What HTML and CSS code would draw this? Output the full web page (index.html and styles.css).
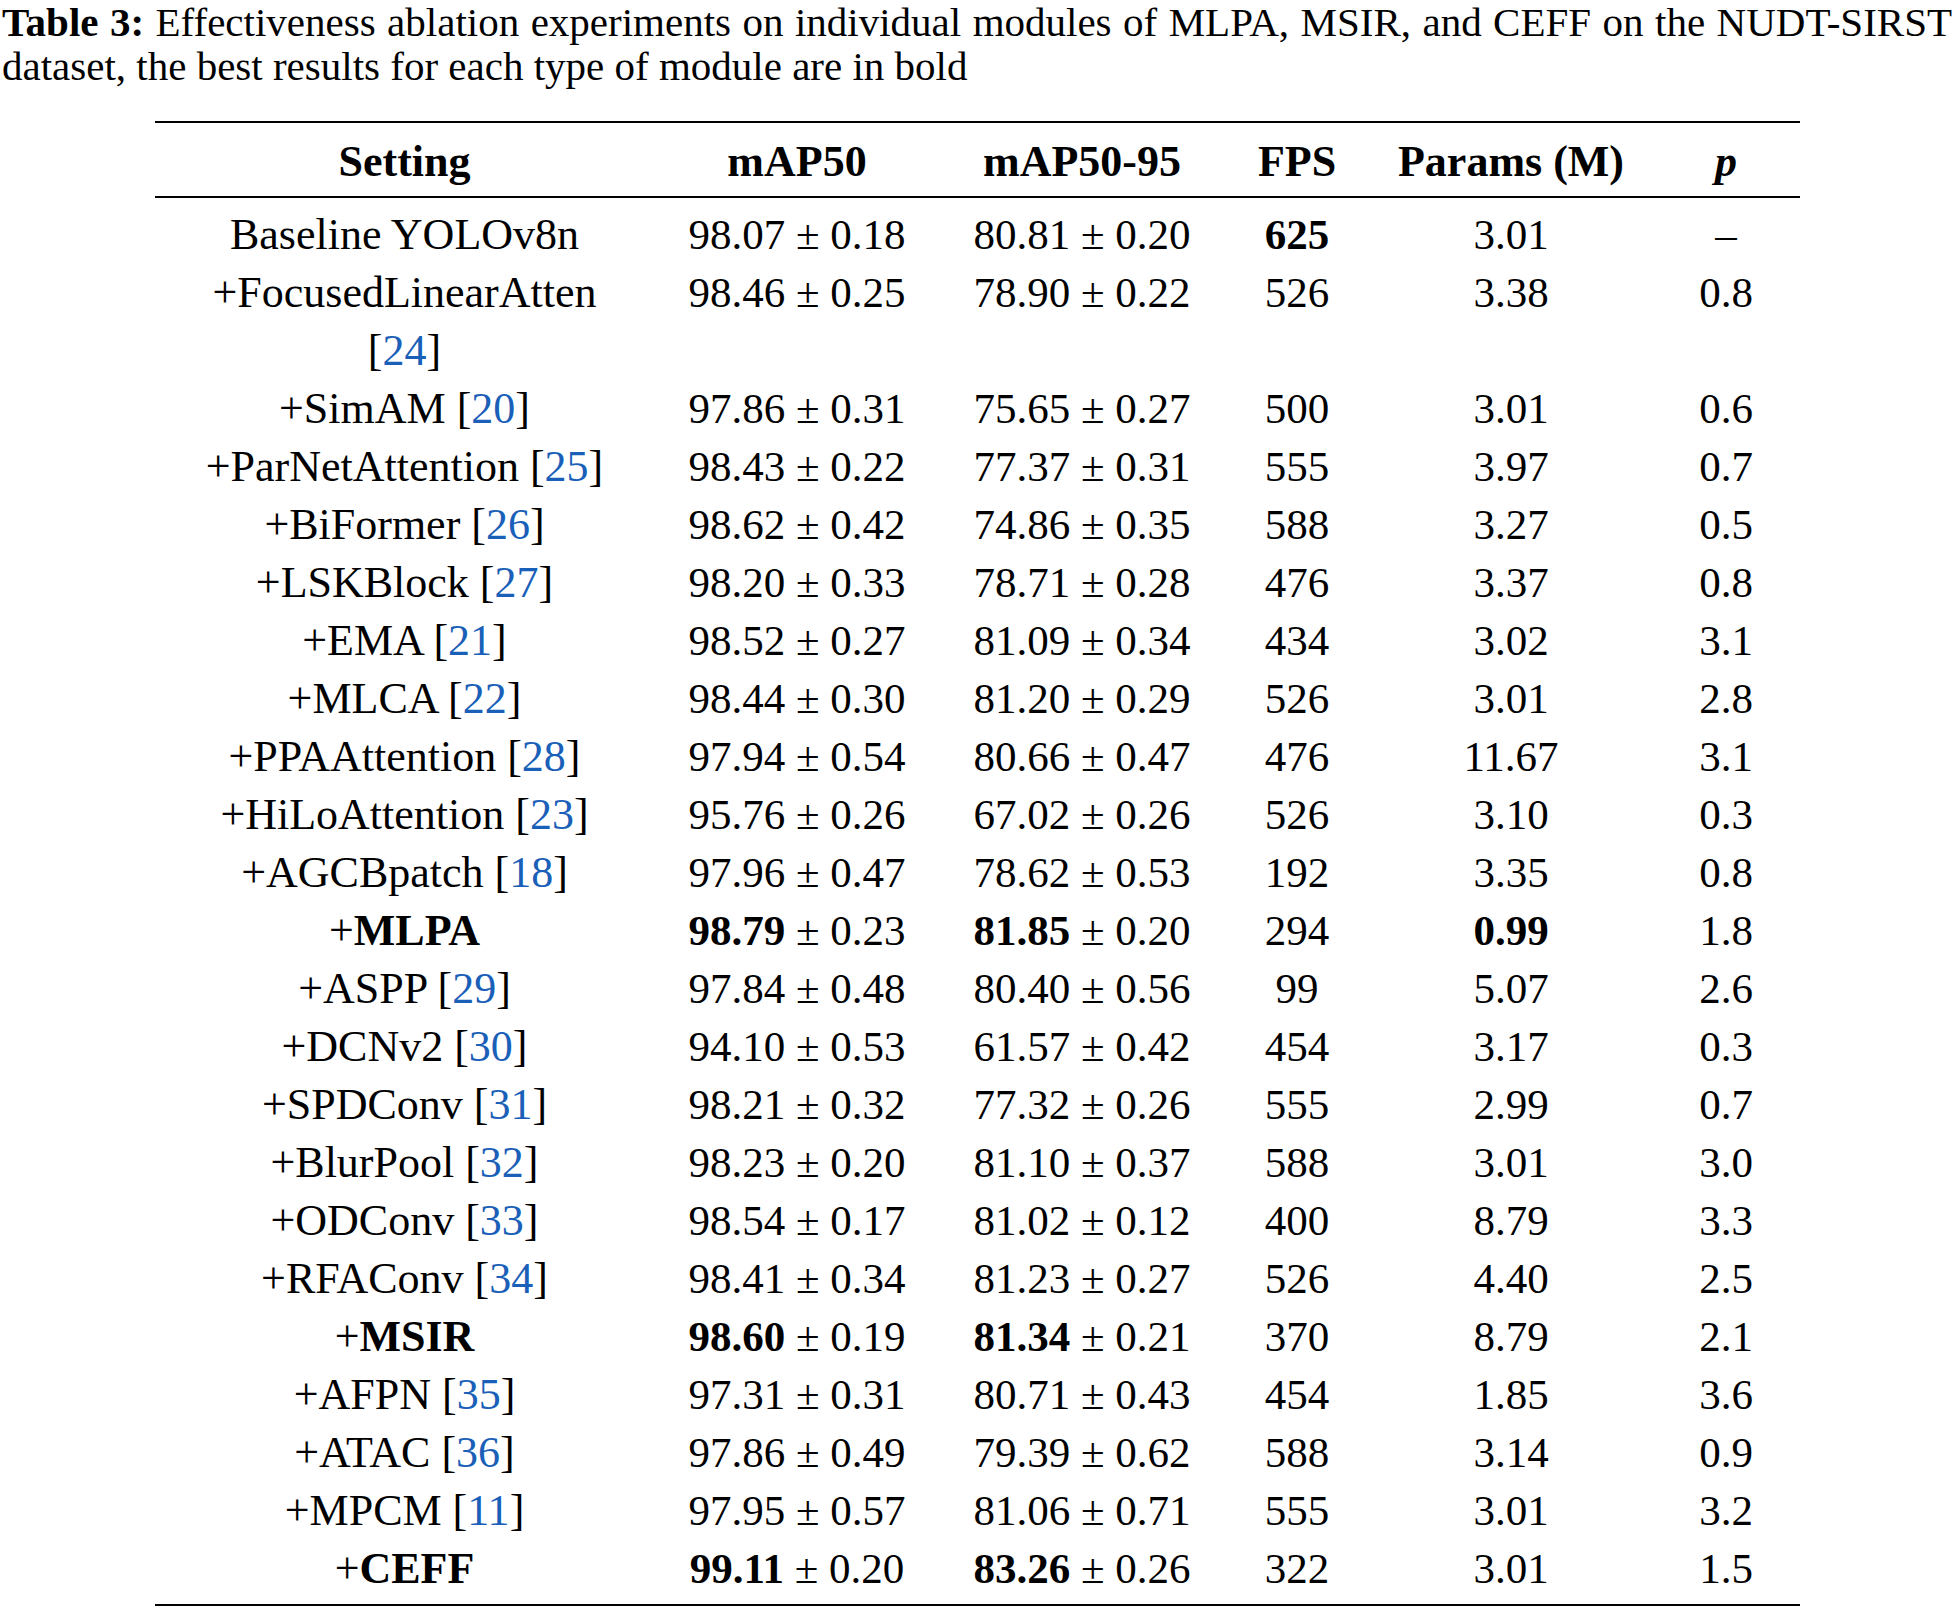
FILE: index.html
```html
<!DOCTYPE html>
<html lang="en">
<head>
<meta charset="utf-8">
<title>Table 3</title>
<link rel="stylesheet" href="styles.css">
</head>
<body>
<div class="caption">
  <span class="cap-line cap-first"><b>Table 3:</b> Effectiveness ablation experiments on individual modules of MLPA, MSIR, and CEFF on the NUDT-SIRST</span>
  <span class="cap-line">dataset, the best results for each type of module are in bold</span>
</div>
<table class="results">
  <colgroup>
    <col class="c-set"><col class="c-map"><col class="c-map95"><col class="c-fps"><col class="c-par"><col class="c-p">
  </colgroup>
  <thead>
    <tr><th>Setting</th><th>mAP50</th><th>mAP50-95</th><th>FPS</th><th>Params (M)</th><th><i>p</i></th></tr>
  </thead>
  <tbody>
    <tr><td class="set">Baseline YOLOv8n</td><td>98.07 ± 0.18</td><td>80.81 ± 0.20</td><td><b>625</b></td><td>3.01</td><td>–</td></tr>
    <tr><td class="set">+FocusedLinearAtten<br>[<span class="ref">24</span>]</td><td>98.46 ± 0.25</td><td>78.90 ± 0.22</td><td>526</td><td>3.38</td><td>0.8</td></tr>
    <tr><td class="set">+SimAM [<span class="ref">20</span>]</td><td>97.86 ± 0.31</td><td>75.65 ± 0.27</td><td>500</td><td>3.01</td><td>0.6</td></tr>
    <tr><td class="set">+ParNetAttention [<span class="ref">25</span>]</td><td>98.43 ± 0.22</td><td>77.37 ± 0.31</td><td>555</td><td>3.97</td><td>0.7</td></tr>
    <tr><td class="set">+BiFormer [<span class="ref">26</span>]</td><td>98.62 ± 0.42</td><td>74.86 ± 0.35</td><td>588</td><td>3.27</td><td>0.5</td></tr>
    <tr><td class="set">+LSKBlock [<span class="ref">27</span>]</td><td>98.20 ± 0.33</td><td>78.71 ± 0.28</td><td>476</td><td>3.37</td><td>0.8</td></tr>
    <tr><td class="set">+EMA [<span class="ref">21</span>]</td><td>98.52 ± 0.27</td><td>81.09 ± 0.34</td><td>434</td><td>3.02</td><td>3.1</td></tr>
    <tr><td class="set">+MLCA [<span class="ref">22</span>]</td><td>98.44 ± 0.30</td><td>81.20 ± 0.29</td><td>526</td><td>3.01</td><td>2.8</td></tr>
    <tr><td class="set">+PPAAttention [<span class="ref">28</span>]</td><td>97.94 ± 0.54</td><td>80.66 ± 0.47</td><td>476</td><td>11.67</td><td>3.1</td></tr>
    <tr><td class="set">+HiLoAttention [<span class="ref">23</span>]</td><td>95.76 ± 0.26</td><td>67.02 ± 0.26</td><td>526</td><td>3.10</td><td>0.3</td></tr>
    <tr><td class="set">+AGCBpatch [<span class="ref">18</span>]</td><td>97.96 ± 0.47</td><td>78.62 ± 0.53</td><td>192</td><td>3.35</td><td>0.8</td></tr>
    <tr><td class="set">+<b>MLPA</b></td><td><b>98.79</b> ± 0.23</td><td><b>81.85</b> ± 0.20</td><td>294</td><td><b>0.99</b></td><td>1.8</td></tr>
    <tr><td class="set">+ASPP [<span class="ref">29</span>]</td><td>97.84 ± 0.48</td><td>80.40 ± 0.56</td><td>99</td><td>5.07</td><td>2.6</td></tr>
    <tr><td class="set">+DCNv2 [<span class="ref">30</span>]</td><td>94.10 ± 0.53</td><td>61.57 ± 0.42</td><td>454</td><td>3.17</td><td>0.3</td></tr>
    <tr><td class="set">+SPDConv [<span class="ref">31</span>]</td><td>98.21 ± 0.32</td><td>77.32 ± 0.26</td><td>555</td><td>2.99</td><td>0.7</td></tr>
    <tr><td class="set">+BlurPool [<span class="ref">32</span>]</td><td>98.23 ± 0.20</td><td>81.10 ± 0.37</td><td>588</td><td>3.01</td><td>3.0</td></tr>
    <tr><td class="set">+ODConv [<span class="ref">33</span>]</td><td>98.54 ± 0.17</td><td>81.02 ± 0.12</td><td>400</td><td>8.79</td><td>3.3</td></tr>
    <tr><td class="set">+RFAConv [<span class="ref">34</span>]</td><td>98.41 ± 0.34</td><td>81.23 ± 0.27</td><td>526</td><td>4.40</td><td>2.5</td></tr>
    <tr><td class="set">+<b>MSIR</b></td><td><b>98.60</b> ± 0.19</td><td><b>81.34</b> ± 0.21</td><td>370</td><td>8.79</td><td>2.1</td></tr>
    <tr><td class="set">+AFPN [<span class="ref">35</span>]</td><td>97.31 ± 0.31</td><td>80.71 ± 0.43</td><td>454</td><td>1.85</td><td>3.6</td></tr>
    <tr><td class="set">+ATAC [<span class="ref">36</span>]</td><td>97.86 ± 0.49</td><td>79.39 ± 0.62</td><td>588</td><td>3.14</td><td>0.9</td></tr>
    <tr><td class="set">+MPCM [<span class="ref">11</span>]</td><td>97.95 ± 0.57</td><td>81.06 ± 0.71</td><td>555</td><td>3.01</td><td>3.2</td></tr>
    <tr><td class="set">+<b>CEFF</b></td><td><b>99.11</b> ± 0.20</td><td><b>83.26</b> ± 0.26</td><td>322</td><td>3.01</td><td>1.5</td></tr>
  </tbody>
</table>
</body>
</html>
```

FILE: styles.css
```css
html, body {
  margin: 0;
  padding: 0;
  background: #ffffff;
}

body {
  font-family: "Liberation Serif", "Times New Roman", serif;
  color: #000000;
  width: 1955px;
}

.caption {
  margin: 0;
  padding: 0 3px 0 2px;
  font-size: 41px;
  line-height: 44px;
}

.cap-line {
  display: block;
}

.cap-first {
  text-align: justify;
  text-align-last: justify;
}

.results {
  margin: 33px 0 0 155px;
  width: 1645px;
  table-layout: fixed;
  border-collapse: separate;
  border-spacing: 0;
}

.c-set { width: 499px; }
.c-map { width: 286px; }
.c-map95 { width: 284px; }
.c-fps { width: 146px; }
.c-par { width: 282px; }
.c-p { width: 148px; }

.results th {
  font-size: 44px;
  font-weight: bold;
  line-height: 62px;
  padding: 8px 0 3px;
  text-align: center;
  vertical-align: top;
  white-space: nowrap;
  border-top: 2px solid #000;
  border-bottom: 2px solid #000;
}

.results td {
  font-size: 43px;
  line-height: 58px;
  padding: 0;
  text-align: center;
  vertical-align: top;
  white-space: nowrap;
}

.results td.set {
  font-size: 44px;
}

.results tbody tr:first-child td {
  padding-top: 8px;
}

.results tbody tr:last-child td {
  padding-bottom: 6px;
  border-bottom: 2px solid #000;
}

.ref {
  color: #1a5fb8;
}
```
